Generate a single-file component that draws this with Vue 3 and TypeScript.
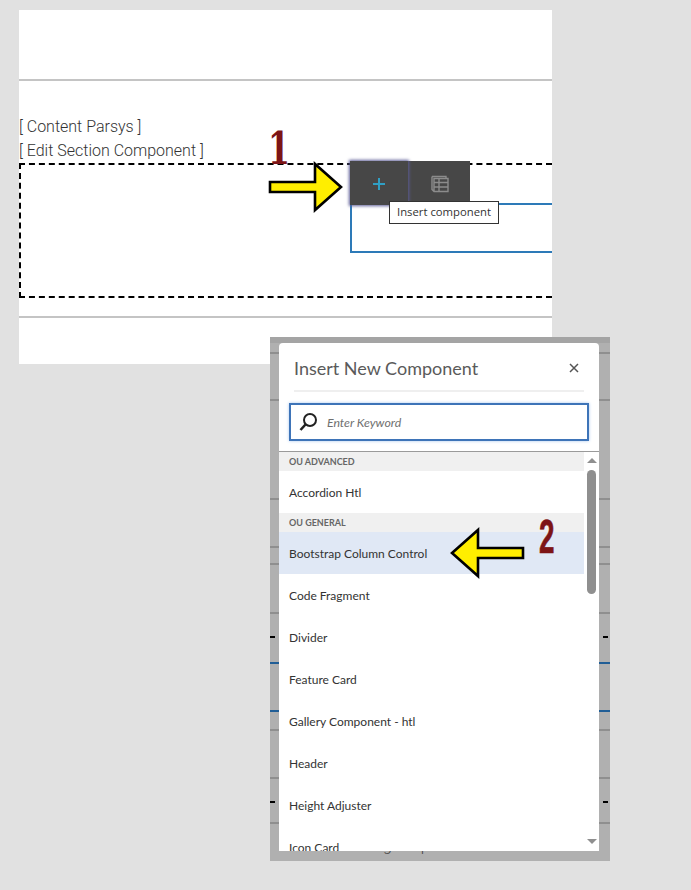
<script setup lang="ts">
interface GhostLine { top: number; kind: string }
const ghostLines: GhostLine[] = [
  { top: 15, kind: 'grey' }, { top: 62, kind: 'grey' }, { top: 161, kind: 'grey' },
  { top: 209, kind: 'grey' }, { top: 226, kind: 'grey' }, { top: 275, kind: 'grey' },
  { top: 299, kind: 'dash' }, { top: 325, kind: 'blue' }, { top: 373, kind: 'blue' },
  { top: 392, kind: 'grey' }, { top: 440, kind: 'grey' }, { top: 464, kind: 'dash' },
  { top: 485, kind: 'grey' }
]
const groups = [
  { name: 'OU ADVANCED', items: ['Accordion Htl'] },
  { name: 'OU GENERAL', items: ['Bootstrap Column Control', 'Code Fragment', 'Divider', 'Feature Card', 'Gallery Component - htl', 'Header', 'Height Adjuster', 'Icon Card'] }
]
</script>

<template>
  <div class="page">
    <section class="panel">
      <div class="top-band"></div>
      <p class="placeholder first">[ Content Parsys ]</p>
      <p class="placeholder">[ Edit Section Component ]</p>
      <div class="dropzone"></div>
      <div class="rule"></div>
    </section>

    <div class="selected-box"></div>
    <div class="toolbar">
      <button class="tool active" aria-label="Insert component">
        <svg width="14" height="14" viewBox="0 0 14 14"><path d="M7 1v12M1 7h12" stroke="#2f9fc4" stroke-width="2" fill="none" /></svg>
      </button>
      <button class="tool" aria-label="Table">
        <svg width="18" height="18" viewBox="0 0 18 18" fill="none" stroke="#8c8c8c">
          <path d="M1 1.5h14v2" stroke-width="1.4" />
          <path d="M1 1.5v13l2 2h14v-13H3v13M3 7.5h14M3 12h14M8 3.5v13" stroke-width="1.4" />
        </svg>
      </button>
    </div>
    <div class="tooltip">Insert component</div>

    <svg class="arrow arrow-one" width="76" height="52" viewBox="0 0 76 52">
      <path d="M2 21H47V3L73 26 47 49V31H2Z" fill="#ffee00" stroke="#000" stroke-width="2.6" />
    </svg>
    <span class="step step-one">1</span>

    <div class="backdrop">
      <i v-for="line in ghostLines" :key="line.top" class="ghost" :class="line.kind" :style="{ top: line.top + 'px' }"></i>
      <span class="ghost-text"><span>g p</span></span>
      <div class="dialog">
        <header class="dialog-head">
          <h2>Insert New Component</h2>
          <svg width="10" height="10" viewBox="0 0 10 10"><path d="M1 1l8 8M9 1l-8 8" stroke="#555" stroke-width="1.5" fill="none" /></svg>
        </header>
        <div class="search">
          <svg width="19" height="20" viewBox="0 0 19 20" fill="none">
            <circle cx="11" cy="8" r="6" stroke="#222" stroke-width="2" />
            <path d="M6.5 12.5L1.5 18" stroke="#222" stroke-width="2.6" />
          </svg>
          <span>Enter Keyword</span>
        </div>
        <div class="results">
          <div class="list">
            <template v-for="group in groups" :key="group.name">
              <div class="group">{{ group.name }}</div>
              <div v-for="item in group.items" :key="item" class="item" :class="{ hover: item === 'Bootstrap Column Control' }">{{ item }}</div>
            </template>
          </div>
          <div class="scrollbar">
            <i class="up"></i>
            <i class="thumb"></i>
            <i class="down"></i>
          </div>
        </div>
      </div>
    </div>

    <svg class="arrow arrow-two" width="76" height="52" viewBox="0 0 76 52">
      <path d="M73 21H28V3L2 26 28 49V31H73Z" fill="#ffee00" stroke="#000" stroke-width="2.6" />
    </svg>
    <span class="step step-two">2</span>
  </div>
</template>

<style scoped>
.page {
  position: relative;
  box-sizing: border-box;
  width: 691px;
  height: 890px;
  padding: 10px 0 0 19px;
  background: #e1e1e1;
  overflow: hidden;
}
.panel {
  width: 533px;
  height: 354px;
  background: #fff;
  display: flow-root;
}
.top-band {
  height: 69px;
  border-bottom: 2px solid #c4c4c4;
}
.placeholder {
  margin: 0;
  font: 300 16px/24px Roboto, sans-serif;
  color: #333;
}
.placeholder.first {
  margin-top: 34px;
}
.dropzone {
  box-sizing: border-box;
  height: 135px;
  border: 2px dashed #000;
  border-right: 0;
}
.rule {
  height: 2px;
  margin-top: 18px;
  background: #c4c4c4;
}
.selected-box {
  position: absolute;
  left: 350px;
  top: 203px;
  box-sizing: border-box;
  width: 202px;
  height: 50px;
  border: 2px solid #2d7ab8;
  border-right: 0;
}
.toolbar {
  position: absolute;
  left: 350px;
  top: 161px;
  display: flex;
  height: 44px;
  background: #474747;
}
.tool {
  display: flex;
  align-items: center;
  justify-content: center;
  width: 60px;
  padding: 2px 0 0;
  border: 0;
  background: transparent;
}
.tool.active {
  width: 58px;
  margin-right: 2px;
  box-shadow: 0 0 3px 1px #5c5c96;
}
.tooltip {
  position: absolute;
  left: 389px;
  top: 201px;
  box-sizing: border-box;
  width: 110px;
  height: 23px;
  border: 1px solid #333;
  background: #fff;
  color: #333;
  font: 11.3px/20px "Open Sans", sans-serif;
  text-align: center;
  white-space: nowrap;
}
.arrow {
  position: absolute;
}
.arrow-one {
  left: 268px;
  top: 161px;
}
.arrow-two {
  left: 450px;
  top: 527px;
}
.step {
  position: absolute;
  color: #7d1416;
  line-height: 1;
}
.step-one {
  left: 268px;
  top: 126px;
  font: 700 45px/1 "DejaVu Serif Condensed", "Liberation Serif", serif;
  transform: scaleX(0.78);
  transform-origin: left top;
}
.step-two {
  left: 539px;
  top: 513px;
  font: 700 48px/1 "Liberation Sans", "DejaVu Sans Condensed", sans-serif;
  -webkit-text-stroke: 0.7px #7d1416;
  transform: scaleX(0.58);
  transform-origin: left top;
}
.backdrop {
  position: absolute;
  left: 270px;
  top: 337px;
  box-sizing: border-box;
  width: 340px;
  height: 524px;
  padding: 6px 11px 10px 9px;
  background: #b0b0b0;
}
.ghost {
  position: absolute;
  left: 0;
  right: 0;
  height: 2px;
}
.ghost.grey {
  background: #8f8f8f;
}
.ghost.blue {
  background: #215e96;
}
.ghost.dash {
  background: repeating-linear-gradient(90deg, #000 0 5px, transparent 5px 9px);
}
.backdrop::before {
  content: "";
  position: absolute;
  left: 0;
  right: 0;
  top: 0;
  height: 6px;
  background: #a4a4a4;
}
.ghost-text {
  position: absolute;
  left: 113px;
  top: 514px;
  height: 6px;
  overflow: hidden;
  font: 300 16px/16px Roboto, sans-serif;
  color: #444;
  word-spacing: 25px;
}
.ghost-text span {
  display: block;
  margin-top: -13px;
}
.dialog {
  position: relative;
  box-sizing: border-box;
  height: 508px;
  display: flex;
  flex-direction: column;
  background: #fff;
  border-radius: 4px 4px 0 0;
  overflow: hidden;
}
.dialog-head {
  display: flex;
  align-items: center;
  justify-content: space-between;
  box-sizing: border-box;
  height: 49px;
  margin: 0 15px;
  padding: 2px 5px 0 0;
  border-bottom: 2px solid #efefef;
}
.dialog-head h2 {
  margin: 0;
  font: 400 18px/1 Lato, sans-serif;
  color: #5a5a5a;
}
.search {
  display: flex;
  align-items: center;
  gap: 9px;
  box-sizing: border-box;
  height: 38px;
  margin: 11px 10px 10px;
  padding-left: 8px;
  border: 2px solid #3e74b8;
  box-shadow: 0 0 3px #a9c8ee;
  font: italic 12.3px Lato, sans-serif;
  color: #6f6f6f;
}
.results {
  flex: 1;
  min-height: 0;
  display: flex;
  border-top: 1px solid #9a9a9a;
}
.list {
  flex: 1;
  overflow: hidden;
}
.group {
  box-sizing: border-box;
  height: 19px;
  padding-left: 10px;
  background: #f0f0f0;
  font: 700 9px/19px Lato, sans-serif;
  color: #666;
}
.item {
  box-sizing: border-box;
  height: 42px;
  padding: 1px 0 0 10px;
  font: 12px/42px Lato, sans-serif;
  color: #333;
}
.item.hover {
  background: #e0e8f5;
}
.scrollbar {
  position: relative;
  width: 15px;
}
.thumb {
  position: absolute;
  left: 3px;
  top: 18px;
  width: 9px;
  height: 124px;
  border-radius: 5px;
  background: #8f8f8f;
}
.up, .down {
  position: absolute;
  left: 3px;
  width: 0;
  height: 0;
  border-left: 5px solid transparent;
  border-right: 5px solid transparent;
}
.up {
  top: 6px;
  border-bottom: 5px solid #8f8f8f;
}
.down {
  bottom: 7px;
  border-top: 5px solid #8f8f8f;
}
</style>
